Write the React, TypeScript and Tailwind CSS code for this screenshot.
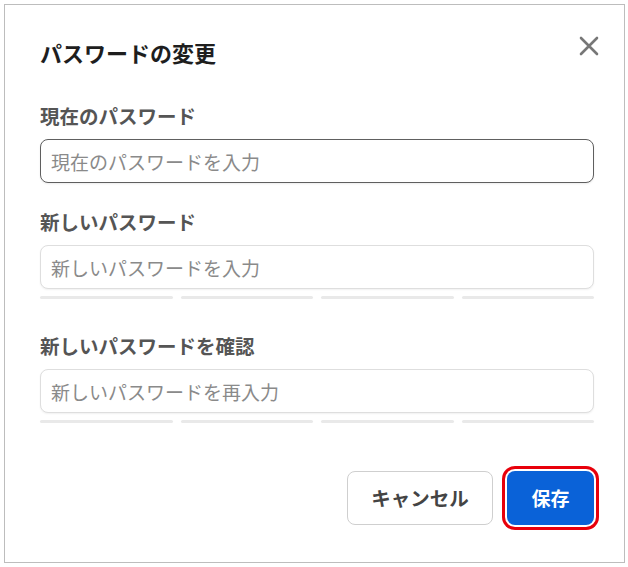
import React from "react";

const FONT = { fontFamily: "'Noto Sans CJK JP', 'Noto Sans', sans-serif" };

function StrengthBars() {
  return (
    <div className="mt-[7px] grid grid-cols-4 gap-[8px]">
      {[0, 1, 2, 3].map((i) => (
        <div key={i} className="h-[3px] rounded-full bg-[#e9e9e9]" />
      ))}
    </div>
  );
}

function Field({
  label,
  placeholder,
  focused,
  bars,
  top,
}: {
  label: string;
  placeholder: string;
  focused?: boolean;
  bars?: boolean;
  top: string;
}) {
  return (
    <div className={top}>
      <label className="block text-[19.5px] leading-[26px] font-bold text-[#555]">{label}</label>
      <input
        type="password"
        placeholder={placeholder}
        className={
          "mt-[10px] block h-[44px] w-full rounded-[8px] border bg-white px-[10px] text-[19px] outline-none placeholder:text-[#8a8a8a] " +
          (focused
            ? "border-[#5f5f5f] shadow-[0_1px_2px_rgba(0,0,0,0.08)]"
            : "border-[#dedede] shadow-[0_1px_2px_rgba(0,0,0,0.06)]")
        }
        style={FONT}
      />
      {bars && <StrengthBars />}
    </div>
  );
}

export default function App() {
  return (
    <div className="h-[567px] w-[628px] bg-white pl-[4px] pt-[4px]" style={FONT}>
      <div className="relative h-[559px] w-[621px] border border-[#bdbdbd] bg-white pl-[35px] pr-[30px] pt-[32px]">
        <button className="absolute right-[21px] top-[27px] flex h-[28px] w-[28px] items-center justify-center text-[#777]">
          <svg width="20" height="20" viewBox="0 0 20 20" fill="none" stroke="currentColor" strokeWidth="2.6" strokeLinecap="round">
            <path d="M2 2 L18 18 M18 2 L2 18" />
          </svg>
        </button>

        <h2 className="text-[22px] leading-[30px] font-bold text-[#1e1e1e]">パスワードの変更</h2>

        <Field top="mt-[36px]" label="現在のパスワード" placeholder="現在のパスワードを入力" focused />
        <Field top="mt-[26px]" label="新しいパスワード" placeholder="新しいパスワードを入力" bars />
        <Field top="mt-[34px]" label="新しいパスワードを確認" placeholder="新しいパスワードを再入力" bars />

        <div className="mt-[48px] flex justify-end gap-[14px]">
          <button className="h-[54px] w-[146px] rounded-[8px] border border-[#cfcfcf] bg-white text-[19.5px] font-bold text-[#444]">
            キャンセル
          </button>
          <button className="h-[54px] w-[87px] rounded-[8px] bg-[#0a62d8] text-[19px] font-bold text-white ring-[3px] ring-[#e8000b] ring-offset-2 ring-offset-white">
            保存
          </button>
        </div>
      </div>
    </div>
  );
}
